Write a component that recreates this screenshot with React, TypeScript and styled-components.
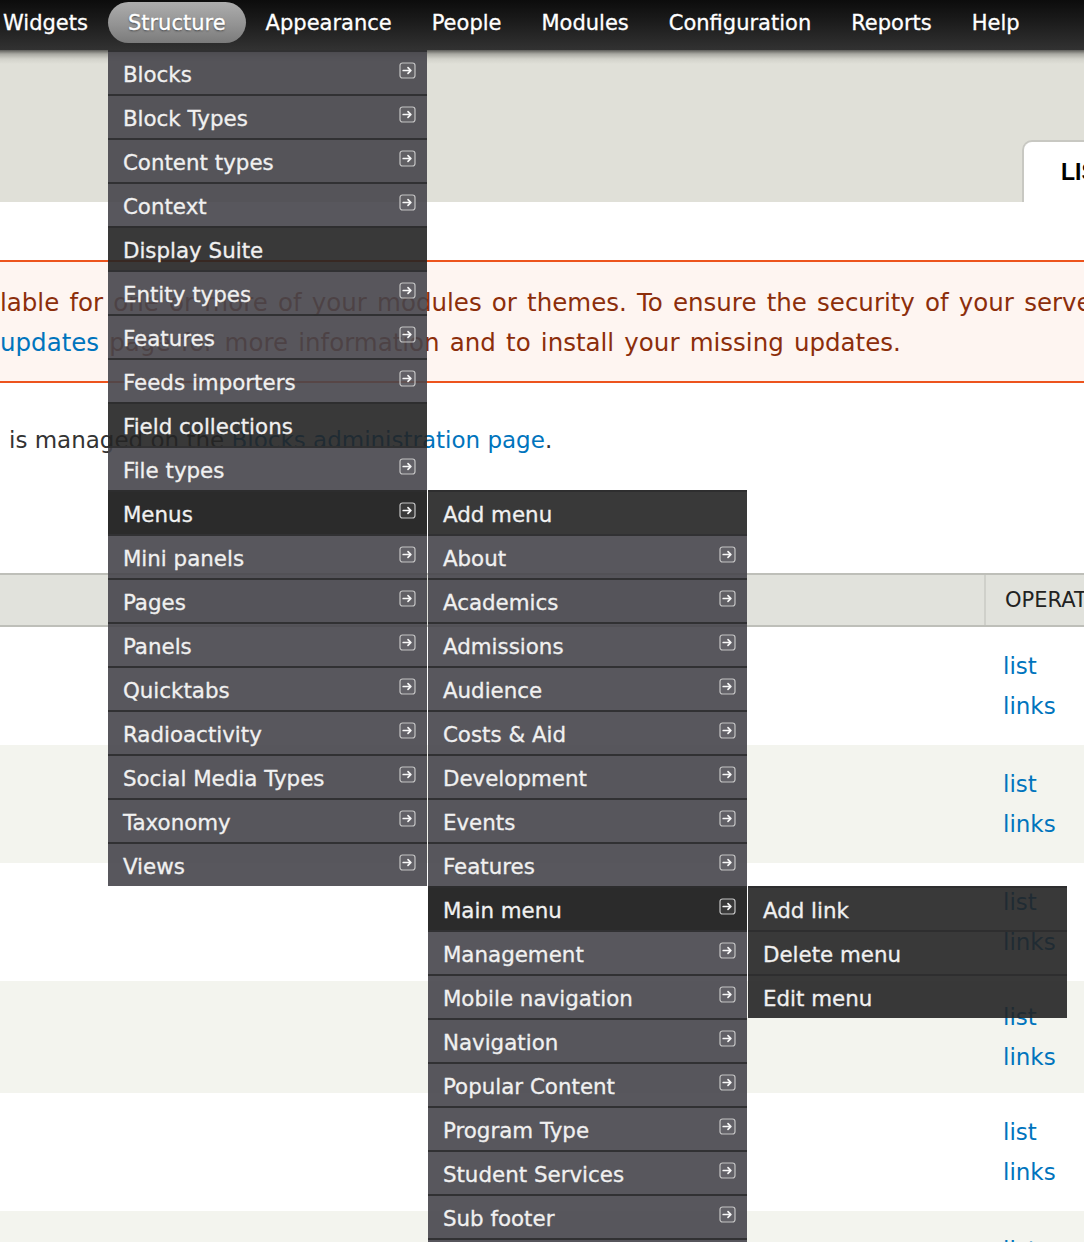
import React from "react";
import styled, { createGlobalStyle, css } from "styled-components";

const GlobalStyle = createGlobalStyle`
  html, body { margin: 0; padding: 0; background: #fff; overflow: hidden; }
  body { font-family: "DejaVu Sans", Verdana, sans-serif; width: 1084px; height: 1242px; }
  #root { width: 1084px; height: 1242px; overflow: hidden; position: relative; }
  * { box-sizing: border-box; }
`;

const Page = styled.div`
  position: relative;
  width: 1084px;
  height: 1242px;
  overflow: hidden;
  background: #fff;
`;

const Toolbar = styled.div`
  position: relative;
  z-index: 10;
  height: 50px;
  background: linear-gradient(to bottom, #0c0c0c 0%, #1c1c1c 45%, #323232 100%);
`;

const NavList = styled.ul`
  display: flex;
  margin: 0 0 0 -17px;
  padding: 0;
  list-style: none;
`;

const NavItem = styled.li`
  position: relative;
  height: 50px;
`;

const NavLink = styled.span<{ $active?: boolean }>`
  display: block;
  margin-top: 2px;
  height: 41px;
  padding: 1px 20px 0;
  line-height: 40px;
  border-radius: 21px;
  color: #fff;
  font-size: 21px;
  -webkit-text-stroke: 0.3px #fff;
  white-space: nowrap;
  ${(p) =>
    p.$active &&
    css`
      background: linear-gradient(to bottom, #adadad 0%, #939393 55%, #7b7b7b 100%);
      text-shadow: 0 1px 2px rgba(0, 0, 0, 0.55);
    `}
`;

const Dropdown = styled.ul<{ $sub?: boolean }>`
  position: absolute;
  z-index: 20;
  top: ${(p) => (p.$sub ? "-2px" : "100%")};
  left: ${(p) => (p.$sub ? "calc(100% + 1px)" : "0")};
  width: 319px;
  margin: 0;
  padding: 0;
  list-style: none;
`;

type Variant = "normal" | "leaf" | "active";

const itemBg: Record<Variant, string> = {
  normal: "rgba(70, 69, 75, 0.9)",
  leaf: "rgba(36, 36, 36, 0.9)",
  active: "rgba(20, 20, 20, 0.9)",
};

const MenuItem = styled.li<{ $variant: Variant }>`
  position: relative;
  display: flex;
  align-items: flex-start;
  justify-content: space-between;
  height: 44px;
  border-top: 2px solid rgba(45, 45, 47, 0.9);
  background: ${(p) => itemBg[p.$variant]};
`;

const Label = styled.span`
  padding: 2px 0 0 15px;
  line-height: 42px;
  font-size: 21.4px;
  color: #f0f0f0;
  -webkit-text-stroke: 0.3px #f0f0f0;
  white-space: nowrap;
`;

const IconBox = styled.span`
  display: block;
  width: 17px;
  height: 17px;
  margin: 10px 11px 0 0;
  flex: none;
`;

const ArrowIcon = () => (
  <IconBox>
    <svg width="17" height="17" viewBox="0 0 17 17">
      <rect x="1" y="1" width="15" height="15" rx="2.5" fill="rgba(255,255,255,0.07)" stroke="#c4c4c4" strokeWidth="1.2" />
      <path d="M4.2 8.5h7.6M9 5.6l2.9 2.9L9 11.4" stroke="#f7f7f7" strokeWidth="1.7" fill="none" strokeLinecap="round" strokeLinejoin="round" />
    </svg>
  </IconBox>
);

const Header = styled.div`
  height: 152px;
  display: flex;
  justify-content: flex-end;
  align-items: flex-end;
  background: linear-gradient(to bottom, #5c5c58 0px, #a9a9a2 4px, #d2d2ca 9px, #e0e0d8 14px);
`;

const Tab = styled.div`
  width: 62px;
  height: 62px;
  border-top: 2px solid #c8c8c2;
  border-left: 2px solid #c8c8c2;
  border-top-left-radius: 10px;
  background: #fff;
  padding-left: 37px;
  line-height: 60px;
  font-family: "Liberation Sans", Arial, sans-serif;
  font-size: 23px;
  font-weight: bold;
  color: #000;
  white-space: nowrap;
`;

const Content = styled.div`
  padding-top: 58px;
`;

const Message = styled.div`
  border-top: 2px solid #ed541d;
  border-bottom: 2px solid #ed541d;
  background: #fef5f1;
  color: #8c2e0b;
  font-size: 24.5px;
  word-spacing: 2.4px;
  line-height: 40px;
  padding: 21px 0 18px;
`;

const MessageLine = styled.div`
  white-space: nowrap;
  overflow: hidden;
`;

const Link = styled.a`
  color: #0074bd;
  text-decoration: none;
`;

const Help = styled.p`
  margin: 37px 0 0;
  padding-left: 9px;
  font-size: 23px;
  line-height: 40px;
  color: #333;
  white-space: nowrap;
`;

const Table = styled.div`
  margin-top: 113px;
`;

const HeaderRow = styled.div`
  display: grid;
  grid-template-columns: 984px 1fr;
  height: 54px;
  border-top: 2px solid #bebfb9;
  border-bottom: 2px solid #bebfb9;
  background: #e1e2dc;
`;

const HeadCell = styled.div<{ $ops?: boolean }>`
  padding-left: 19px;
  font-size: 21px;
  line-height: 50px;
  text-transform: uppercase;
  color: #222;
  white-space: nowrap;
  ${(p) => p.$ops && css`border-left: 2px solid #cfd0ca;`}
`;

const Row = styled.div<{ $even: boolean; $h: number }>`
  display: grid;
  grid-template-columns: 984px 1fr;
  height: ${(p) => p.$h}px;
  background: ${(p) => (p.$even ? "#f3f4ee" : "#fff")};
`;

const OpsCell = styled.div`
  padding-left: 19px;
  display: flex;
  flex-direction: column;
  justify-content: center;
  font-size: 23px;
  line-height: 40px;
`;

type Item = { label: string; variant?: Variant; children?: Item[]; arrow?: boolean };

const level3: Item[] = [
  { label: "Add link", variant: "leaf", arrow: false },
  { label: "Delete menu", variant: "leaf", arrow: false },
  { label: "Edit menu", variant: "leaf", arrow: false },
];

const level2: Item[] = [
  { label: "Add menu", variant: "leaf", arrow: false },
  { label: "About" },
  { label: "Academics" },
  { label: "Admissions" },
  { label: "Audience" },
  { label: "Costs & Aid" },
  { label: "Development" },
  { label: "Events" },
  { label: "Features" },
  { label: "Main menu", variant: "active", children: level3 },
  { label: "Management" },
  { label: "Mobile navigation" },
  { label: "Navigation" },
  { label: "Popular Content" },
  { label: "Program Type" },
  { label: "Student Services" },
  { label: "Sub footer" },
  { label: "Taxonomy menu" },
];

const level1: Item[] = [
  { label: "Blocks" },
  { label: "Block Types" },
  { label: "Content types" },
  { label: "Context" },
  { label: "Display Suite", variant: "leaf", arrow: false },
  { label: "Entity types" },
  { label: "Features" },
  { label: "Feeds importers" },
  { label: "Field collections", variant: "leaf", arrow: false },
  { label: "File types" },
  { label: "Menus", variant: "active", children: level2 },
  { label: "Mini panels" },
  { label: "Pages" },
  { label: "Panels" },
  { label: "Quicktabs" },
  { label: "Radioactivity" },
  { label: "Social Media Types" },
  { label: "Taxonomy" },
  { label: "Views" },
];

const MenuList = ({ items, sub }: { items: Item[]; sub?: boolean }) => (
  <Dropdown $sub={sub}>
    {items.map((it) => (
      <MenuItem key={it.label} $variant={it.variant ?? "normal"}>
        <Label>{it.label}</Label>
        {it.arrow !== false && <ArrowIcon />}
        {it.children && <MenuList items={it.children} sub />}
      </MenuItem>
    ))}
  </Dropdown>
);

const navItems = ["Widgets", "Structure", "Appearance", "People", "Modules", "Configuration", "Reports", "Help"];

const rowHeights = [118, 118, 118, 112, 118, 118];

export default function App() {
  return (
    <>
      <GlobalStyle />
      <Page>
        <Toolbar>
          <NavList>
            {navItems.map((n) => (
              <NavItem key={n}>
                <NavLink $active={n === "Structure"}>{n}</NavLink>
                {n === "Structure" && <MenuList items={level1} />}
              </NavItem>
            ))}
          </NavList>
        </Toolbar>
        <Header>
          <Tab>LIST LINKS</Tab>
        </Header>
        <Content>
          <Message>
            <MessageLine>
              lable for one or more of your modules or themes. To ensure the security of your server, you should update immediately! See the available
            </MessageLine>
            <MessageLine>
              <Link href="#">updates</Link> page for more information and to install your missing updates.
            </MessageLine>
          </Message>
          <Help>
            is managed on the <Link href="#">Blocks administration page</Link>.
          </Help>
          <Table>
            <HeaderRow>
              <HeadCell />
              <HeadCell $ops>Operations</HeadCell>
            </HeaderRow>
            {rowHeights.map((h, i) => (
              <Row key={i} $even={i % 2 === 1} $h={h}>
                <div />
                <OpsCell>
                  <Link href="#">list</Link>
                  <Link href="#">links</Link>
                </OpsCell>
              </Row>
            ))}
          </Table>
        </Content>
      </Page>
    </>
  );
}
